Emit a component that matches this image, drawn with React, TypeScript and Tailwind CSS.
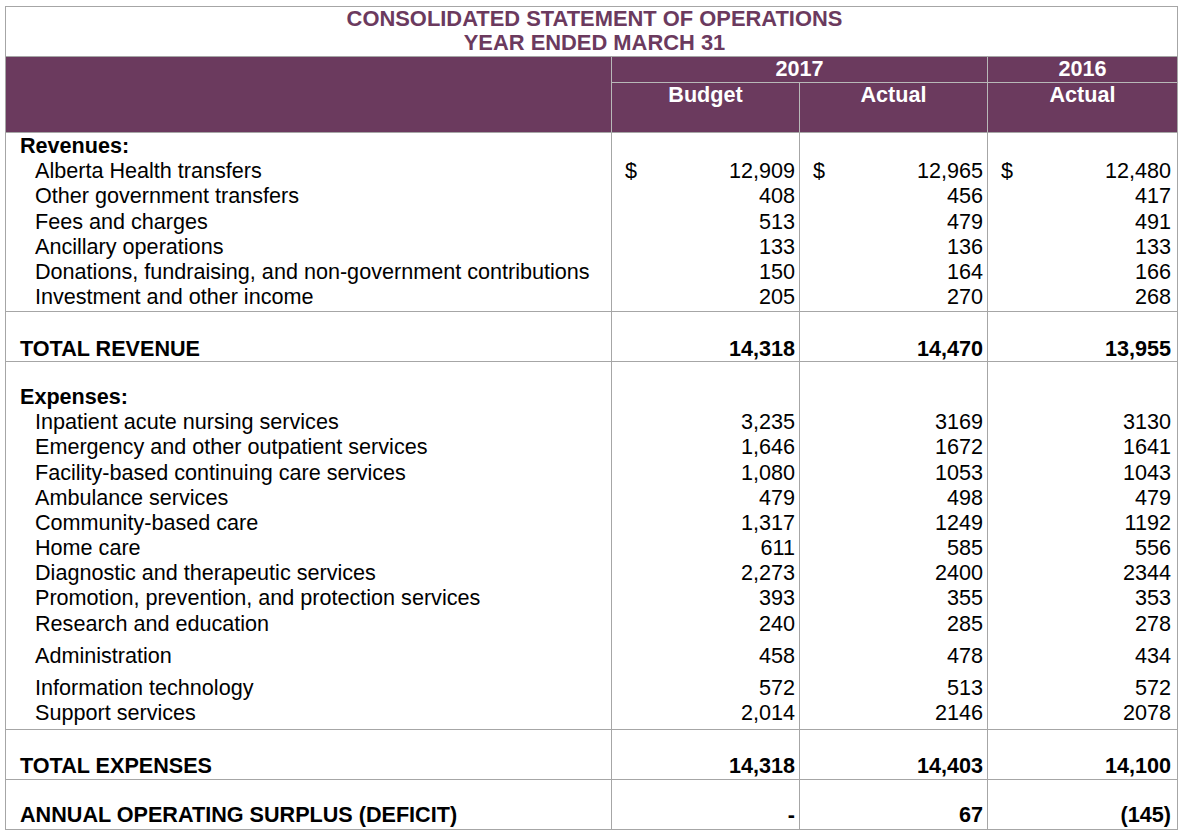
type Row = {
  label: string;
  v?: [string, string, string];
  dollar?: boolean;
  bold?: boolean;
  indent?: boolean;
  tall?: boolean;
};

const revenues: Row[] = [
  { label: "Revenues:", bold: true },
  { label: "Alberta Health transfers", v: ["12,909", "12,965", "12,480"], dollar: true, indent: true },
  { label: "Other government transfers", v: ["408", "456", "417"], indent: true },
  { label: "Fees and charges", v: ["513", "479", "491"], indent: true },
  { label: "Ancillary operations", v: ["133", "136", "133"], indent: true },
  { label: "Donations, fundraising, and non-government contributions", v: ["150", "164", "166"], indent: true },
  { label: "Investment and other income", v: ["205", "270", "268"], indent: true },
];

const totalRevenue: Row[] = [{ label: "TOTAL REVENUE", v: ["14,318", "14,470", "13,955"], bold: true }];

const expenses: Row[] = [
  { label: "Expenses:", bold: true },
  { label: "Inpatient acute nursing services", v: ["3,235", "3169", "3130"], indent: true },
  { label: "Emergency and other outpatient services", v: ["1,646", "1672", "1641"], indent: true },
  { label: "Facility-based continuing care services", v: ["1,080", "1053", "1043"], indent: true },
  { label: "Ambulance services", v: ["479", "498", "479"], indent: true },
  { label: "Community-based care", v: ["1,317", "1249", "1192"], indent: true },
  { label: "Home care", v: ["611", "585", "556"], indent: true },
  { label: "Diagnostic and therapeutic services", v: ["2,273", "2400", "2344"], indent: true },
  { label: "Promotion, prevention, and protection services", v: ["393", "355", "353"], indent: true },
  { label: "Research and education", v: ["240", "285", "278"], indent: true },
  { label: "Administration", v: ["458", "478", "434"], indent: true, tall: true },
  { label: "Information technology", v: ["572", "513", "572"], indent: true, tall: true },
  { label: "Support services", v: ["2,014", "2146", "2078"], indent: true },
];

const totalExpenses: Row[] = [{ label: "TOTAL EXPENSES", v: ["14,318", "14,403", "14,100"], bold: true }];

const surplus: Row[] = [{ label: "ANNUAL OPERATING SURPLUS (DEFICIT)", v: ["-", "67", "(145)"], bold: true }];

const rowH = (r: Row) => (r.tall ? "h-[32px]" : "h-[25.2px]");

const Section = ({ rows, pad, last }: { rows: Row[]; pad: string; last?: boolean }) => {
  return (
    <div
      className={`grid grid-cols-[606px_188px_188px_189px] ${last ? "" : "border-b border-[#a6a6a6]"}`}
    >
      <div className={`flex flex-col border-r border-[#a6a6a6] pl-[14px] ${pad}`}>
        {rows.map((r, i) => (
          <div
            key={i}
            className={`flex items-end ${rowH(r)} ${r.bold ? "font-bold" : ""} ${r.indent ? "pl-[15px]" : ""}`}
          >
            <span className="whitespace-nowrap">{r.label}</span>
          </div>
        ))}
      </div>
      {[0, 1, 2].map((c) => (
        <div
          key={c}
          className={`flex flex-col pl-[13px] ${pad} ${c < 2 ? "border-r border-[#a6a6a6] pr-[4px]" : "pr-[6px]"}`}
        >
          {rows.map((r, i) => (
            <div
              key={i}
              className={`flex items-end justify-between ${rowH(r)} ${r.bold ? "font-bold" : ""}`}
            >
              <span>{r.dollar ? "$" : ""}</span>
              <span>{r.v ? r.v[c] : ""}</span>
            </div>
          ))}
        </div>
      ))}
    </div>
  );
};

export default function App() {
  return (
    <div className="min-h-screen bg-white pl-[5px] pt-[6px] font-['Liberation_Sans',Arial,sans-serif] text-[21.6px] leading-[25.2px] text-black">
      <div className="w-[1173px] border border-[#a6a6a6]">
        {/* title */}
        <div className="flex h-[50px] flex-col items-center border-b border-[#a6a6a6] pl-[6px] text-[21.9px] font-bold leading-[24px] text-[#6b3a5e]">
          <span>CONSOLIDATED STATEMENT OF OPERATIONS</span>
          <span>YEAR ENDED MARCH 31</span>
        </div>

        {/* column headings */}
        <div className="grid grid-cols-[606px_1fr] border-b border-[#a6a6a6] bg-[#6b3a5e] font-bold leading-[23px] text-white">
          <div className="h-[75px] border-r border-[#b8b8b8]" />
          <div className="flex flex-col">
            <div className="grid h-[26px] grid-cols-[376px_1fr] border-b border-[#b8b8b8]">
              <div className="border-r border-[#b8b8b8] text-center">2017</div>
              <div className="text-center">2016</div>
            </div>
            <div className="grid h-[49px] grid-cols-[188px_188px_1fr]">
              <div className="border-r border-[#b8b8b8] text-center">Budget</div>
              <div className="border-r border-[#b8b8b8] text-center">Actual</div>
              <div className="text-center">Actual</div>
            </div>
          </div>
        </div>

        <Section rows={revenues} pad="h-[178px] pt-0" />
        <Section rows={totalRevenue} pad="h-[49px] pt-[24px]" />
        <Section rows={expenses} pad="h-[367px] pt-[22px]" />
        <Section rows={totalExpenses} pad="h-[49px] pt-[23px]" />
        <Section rows={surplus} pad="h-[49px] pt-[22px]" last />
      </div>
    </div>
  );
}
